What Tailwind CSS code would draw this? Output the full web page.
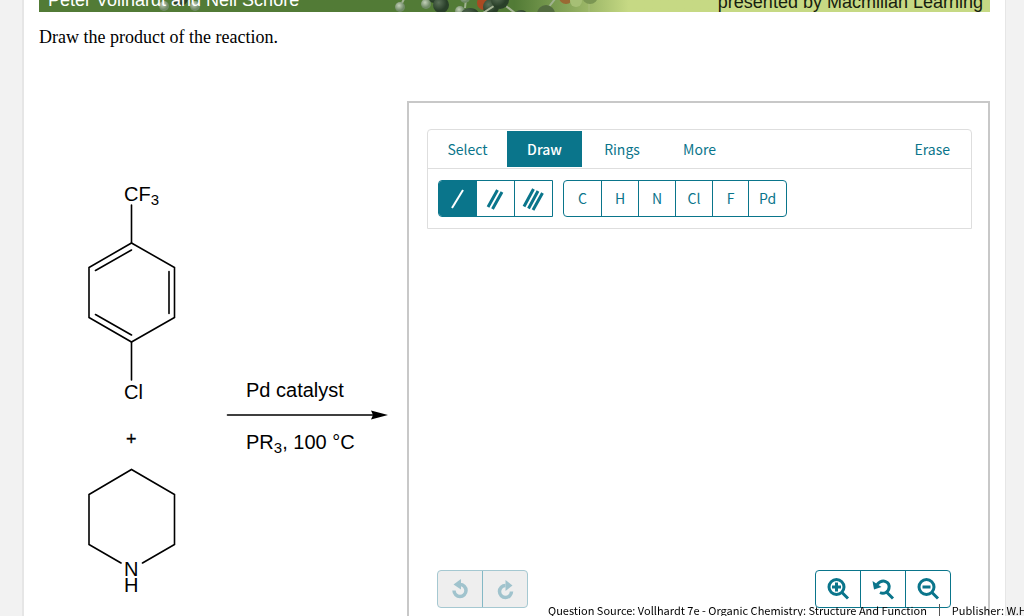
<!DOCTYPE html>
<html lang="en">
<head>
  <meta charset="UTF-8" />
  <meta name="viewport" content="width=device-width, initial-scale=1" />
  <title>Draw the product of the reaction</title>
  <script src="https://cdn.jsdelivr.net/npm/@tailwindcss/browser@4"></script>
</head>
<body class="h-screen overflow-hidden bg-[#f2f2f2] pl-[22px] pr-[18px] font-['Noto_Sans_CJK_SC',sans-serif]">
  <main class="flex h-full flex-col border-l-2 border-r border-[#e6e6e6] bg-white px-[15px]">

    <!-- Book banner -->
    <header class="relative flex h-3 shrink-0 items-end justify-between overflow-hidden bg-linear-to-r from-[#527b36] from-50% to-[#c6d984] to-62% pl-[9px] pr-[7px] font-['Liberation_Sans',sans-serif] text-lg/5">
      <svg class="absolute left-0 top-0" width="600" height="12" viewBox="39 0 600 12" aria-hidden="true">
        <defs>
          <radialGradient id="carbon" cx="35%" cy="35%"><stop offset="0" stop-color="#5c7259" /><stop offset="1" stop-color="#293f29" /></radialGradient>
          <radialGradient id="hydrogen" cx="40%" cy="35%"><stop offset="0" stop-color="#c3d0b9" /><stop offset="1" stop-color="#718b67" /></radialGradient>
        </defs>
        <g stroke="#a0b290" stroke-width="2">
          <path d="M401 5l3-6M465 8l1-9M548 8l7-9" />
          <path d="M589 0v12" stroke="#a9bd7c" stroke-width="1" />
        </g>
        <circle cx="164" cy="6" r="5" fill="url(#hydrogen)" />
        <circle cx="180" cy="-2" r="8" fill="url(#carbon)" />
        <circle cx="195" cy="6" r="5" fill="url(#hydrogen)" />
        <circle cx="400" cy="7" r="5" fill="url(#hydrogen)" />
        <circle cx="434" cy="-3" r="6" fill="url(#carbon)" />
        <circle cx="426" cy="4" r="5" fill="url(#hydrogen)" />
        <circle cx="441" cy="5" r="8" fill="url(#carbon)" />
        <circle cx="465" cy="-2" r="5" fill="url(#hydrogen)" />
        <circle cx="460" cy="11" r="5" fill="url(#hydrogen)" />
        <circle cx="470" cy="19" r="11" fill="url(#carbon)" />
        <circle cx="484" cy="3" r="7" fill="#aa4a22" />
        <circle cx="491" cy="7" r="8" fill="url(#carbon)" />
        <path d="M483 13l14-9M502 3l13 10" stroke="#a8b698" stroke-width="2" />
        <circle cx="500" cy="0" r="9" fill="url(#carbon)" />
        <circle cx="521" cy="18" r="8" fill="url(#carbon)" />
        <circle cx="546" cy="14" r="9" fill="#536c40" />
        <circle cx="566" cy="-3" r="7" fill="#9a6933" />
        <circle cx="576" cy="1" r="6" fill="#a6bf75" />
        <circle cx="590" cy="-4" r="8" fill="#7b9653" />
      </svg>
      <span class="relative mb-[2px] whitespace-nowrap text-white">Peter Vollhardt and Neil Schore</span>
      <span class="relative whitespace-nowrap text-[#16200e]">presented by Macmillan Learning</span>
    </header>

    <p class="mt-[13px] h-[76px] shrink-0 font-['Liberation_Serif',serif] text-lg/6 text-black">Draw the product of the reaction.</p>

    <div class="flex min-h-0 flex-1">
      <!-- Reaction scheme -->
      <svg class="shrink-0 font-['Liberation_Sans',sans-serif]" width="368" height="515" viewBox="39 101 368 515" role="img" aria-label="Reaction scheme">
        <g fill="none" stroke="#000" stroke-width="1.6" stroke-linecap="round">
          <path d="M131.500 205V243M131.500 342V380" />
          <path d="M131.500 243L174.500 267.500V317.500L131.500 342L89 317.500V267.500Z" />
          <path d="M131.500 250L95.500 270.500M169 271.500V313.500M131.500 335L95.500 314.500" />
          <path d="M121 563L89 544.500V494.500L131.500 469.500L174.500 494.500V544.500L142.500 563" />
          <path d="M227.500 415H376" />
        </g>
        <path d="M371 410.500L388 415L371 419.500L373 415Z" />
        <g font-size="20">
          <text x="124" y="201">CF<tspan font-size="15" dy="4">3</tspan></text>
          <text x="124" y="399">Cl</text>
          <text x="126" y="445" font-size="18" stroke="#000" stroke-width=".3">+</text>
          <text x="124" y="576">N</text>
          <text x="124" y="592">H</text>
          <text x="246" y="397">Pd catalyst</text>
          <text x="246" y="449">PR<tspan font-size="15" dy="4">3</tspan><tspan dy="-4">, 100 °C</tspan></text>
        </g>
      </svg>

      <!-- Structure editor -->
      <section class="flex min-w-0 flex-1 flex-col border-x-2 border-t-2 border-[#c8c8c8] pl-[18px] pr-4 pt-[26px] text-sm/5 text-[#0a758b]">
        <div class="rounded-t border border-[#dedede]">
          <nav class="flex h-[39px] items-center border-b border-[#dedede]">
            <button class="h-9 w-[79px]">Select</button>
            <button class="h-9 w-[75px] bg-[#0a758b] font-medium text-white">Draw</button>
            <button class="h-9 w-20">Rings</button>
            <button class="h-9 w-[75px]">More</button>
            <button class="ml-auto h-9 px-[21px]">Erase</button>
          </nav>
          <div class="flex h-[59px] items-center gap-[10px] px-[10px]">
            <div class="flex h-[37px] divide-x divide-[#0a758b] overflow-hidden rounded-l border border-[#0a758b]">
              <button class="flex w-[38px] items-center justify-center bg-[#0a758b]" aria-label="Single bond">
                <svg width="24" height="24" viewBox="0 0 24 24" stroke="#fff" stroke-width="2"><path d="M6 21L17 3" /></svg>
              </button>
              <button class="flex w-[38px] items-center justify-center" aria-label="Double bond">
                <svg width="24" height="24" viewBox="0 0 24 24" stroke="#0a758b" stroke-width="3"><path d="M4 20L13.500 3M8.500 22L18 5" /></svg>
              </button>
              <button class="flex w-[37px] items-center justify-center" aria-label="Triple bond">
                <svg width="24" height="24" viewBox="0 0 24 24" stroke="#0a758b" stroke-width="3"><path d="M2 19.500L11.500 2M6.500 21.500L16 4M11 23L20.500 6" /></svg>
              </button>
            </div>
            <div class="flex h-[37px] divide-x divide-[#0a758b] rounded border border-[#0a758b]">
              <button class="w-[38px] pb-[2px]">C</button>
              <button class="w-[37px] pb-[2px]">H</button>
              <button class="w-[37px] pb-[2px]">N</button>
              <button class="w-[37px] pb-[2px]">Cl</button>
              <button class="w-[36px] pb-[2px]">F</button>
              <button class="w-[37px] pb-[2px]">Pd</button>
            </div>
          </div>
        </div>

        <div class="mt-auto flex justify-between pb-2 pl-[10px] pr-[21px]">
          <div class="flex h-[38px] divide-x divide-[#84b8c5] rounded border border-[#a5c8d1] bg-[#eee]">
            <button class="flex w-[45px] items-center justify-center" aria-label="Undo" disabled>
              <svg width="22" height="22" viewBox="0 0 22 22" fill="none" stroke="#a0c3cd" stroke-width="3.500"><path d="M11 6.500A6 6 0 1 1 5 12.500" /><path d="M4.500 6.500L12 1V11.500Z" fill="#a0c3cd" stroke="none" /></svg>
            </button>
            <button class="flex w-11 items-center justify-center" aria-label="Redo" disabled>
              <svg width="22" height="22" viewBox="0 0 22 22" fill="none" stroke="#a0c3cd" stroke-width="3.500"><path d="M11.500 7.500A6 6 0 1 0 17.500 13.500" /><path d="M18.500 7.500L11.500 2V13Z" fill="#a0c3cd" stroke="none" /></svg>
            </button>
          </div>
          <div class="flex h-[38px] divide-x divide-[#0a758b] rounded border border-[#0a758b]">
            <button class="flex w-[45px] items-center justify-center" aria-label="Zoom in">
              <svg width="24" height="24" viewBox="0 0 24 24" fill="none" stroke="#0a758b" stroke-width="3"><circle cx="10.500" cy="10" r="7.500" /><path d="M15.500 15L22 21.500M6 10H15M10.500 5.500V14.500" /></svg>
            </button>
            <button class="flex w-[45px] items-center justify-center" aria-label="Reset zoom">
              <svg width="24" height="24" viewBox="0 0 24 24" fill="none" stroke="#0a758b" stroke-width="3"><path d="M6 7.500C12 1 19 5 18 11C17.500 15 13 17.500 9 15.500M15.500 15L22 21.500" /><path d="M1.500 4L3 12.500L10.500 10Z" fill="#0a758b" stroke="none" /></svg>
            </button>
            <button class="flex w-11 items-center justify-center" aria-label="Zoom out">
              <svg width="24" height="24" viewBox="0 0 24 24" fill="none" stroke="#0a758b" stroke-width="3"><circle cx="10.500" cy="10" r="7.500" /><path d="M15.500 15L22 21.500M6.500 10H14.500" /></svg>
            </button>
          </div>
        </div>
      </section>
    </div>
  </main>

  <!-- Source line lies over the bottom of the editor -->
  <footer class="fixed bottom-0 left-[548px] right-0 h-3 overflow-hidden text-[11px]/4 text-black">
    <div class="-mt-[2px] flex items-center whitespace-nowrap">
      <span>Question Source: Vollhardt 7e - Organic Chemistry: Structure And Function</span>
      <span class="mx-[12px] h-4 w-px shrink-0 bg-[#555]"></span>
      <span>Publisher: W.H. Freeman</span>
    </div>
  </footer>
</body>
</html>
